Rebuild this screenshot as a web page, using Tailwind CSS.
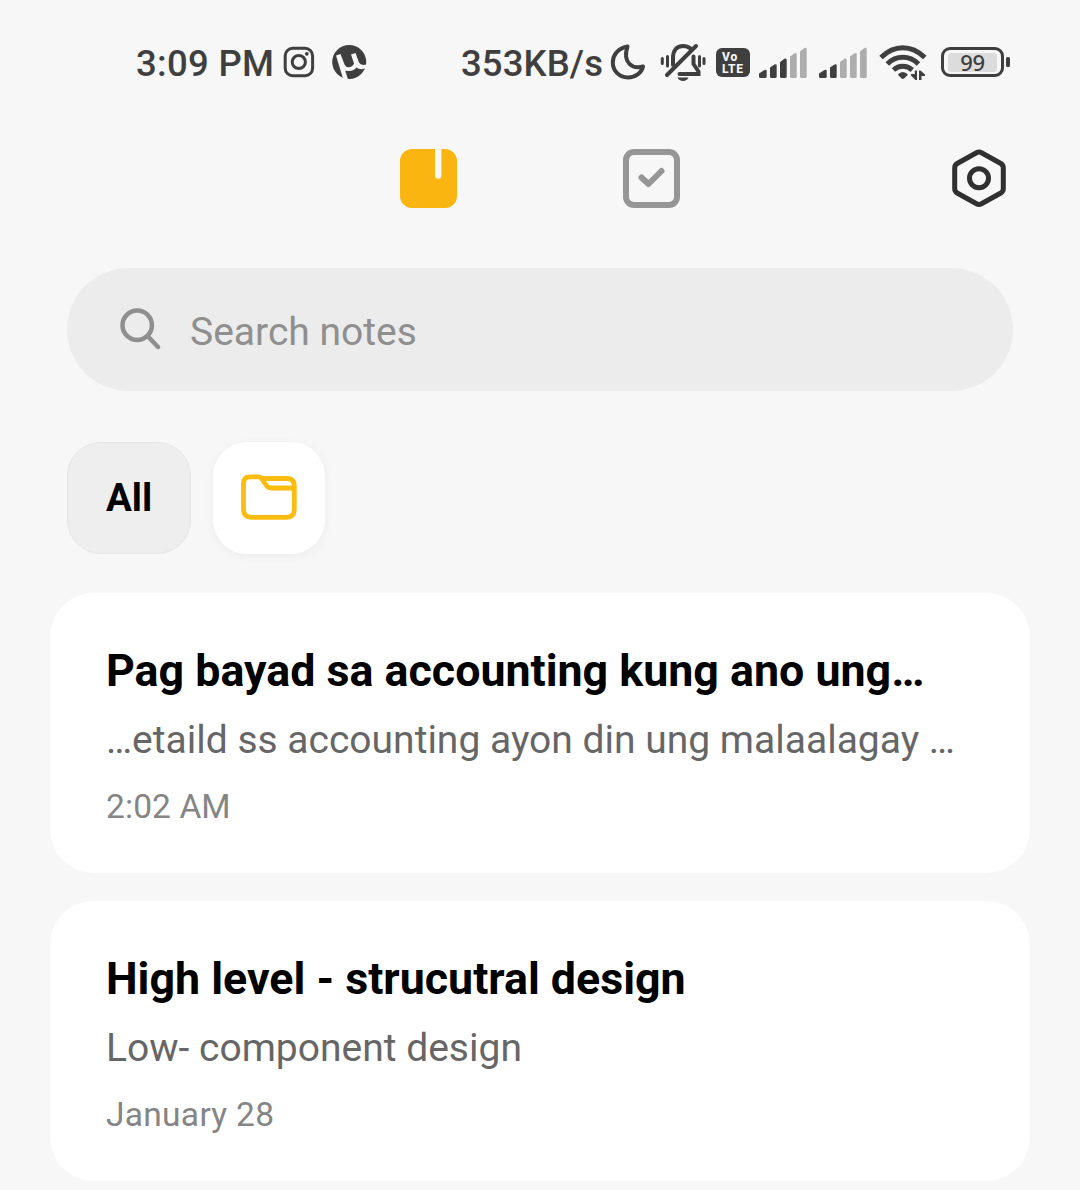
<!DOCTYPE html>
<html lang="en">
<head>
<meta charset="utf-8">
<meta name="viewport" content="width=device-width, initial-scale=1">
<title>Notes</title>
<script src="https://cdn.jsdelivr.net/npm/@tailwindcss/browser@4"></script>
</head>
<body class="bg-[#f7f7f7] font-[Roboto,sans-serif]">
<div class="flex h-[1190px] w-[1080px] flex-col overflow-hidden">

  <!-- Status bar -->
  <header class="mt-9 flex h-14 shrink-0 items-center pl-34 text-[36.500px] leading-none font-medium text-[#3f3f3f]">
    <span class="w-[147px] tracking-[0.3px] whitespace-nowrap">3:09 PM</span>
    <svg class="h-14 w-8" viewBox="283 36 32 56" fill="none" stroke="#3f3f3f" stroke-width="3">
      <rect x="285.2" y="48.3" width="27.4" height="27.4" rx="7.5"/>
      <circle cx="298.8" cy="62" r="6.6"/>
      <circle cx="306.8" cy="53.8" r="1.9" fill="#3f3f3f" stroke="none"/>
    </svg>
    <svg class="ml-4 h-14 w-9" viewBox="331 36 36 56" fill="none">
      <circle cx="349.2" cy="62" r="17" fill="#3f3f3f"/>
      <path d="M336 55.500L340.500 54L344.500 64.500Q346 67.500 349 67.200Q353 66.500 354 63.500L351 54.500L355.500 53L359 62.500Q360.500 66 367 64.500V68Q360 70.500 356.500 67.500Q354 70.800 348.800 71L345.300 70.800L348 79.500L343 78.500Z" fill="#f7f7f7"/>
    </svg>
    <span class="ml-[94px] w-[149px] tracking-[0.1px] whitespace-nowrap">353KB/s</span>
    <svg class="h-14 w-[38px]" viewBox="610 36 38 56" fill="none" stroke="#3f3f3f" stroke-width="4" stroke-linejoin="round">
      <path d="M627.500 46.500C617 48.500 612.800 56 612.800 62.500C612.800 71 619.500 77.500 628 77.500C635.500 77.500 641.500 73 643 66.500C633 69.500 622 63 627.500 46.500Z"/>
    </svg>
    <svg class="ml-3 h-14 w-[46px]" viewBox="660 36 46 56" fill="none" stroke="#3f3f3f" stroke-width="4" stroke-linecap="round">
      <path d="M673 65V58C673 50 677 46 683 46C686.500 46 688.500 46.800 690.500 48.500M693.500 56.500V64L698.500 71.500V74H679.500M696 46L667 75"/>
      <path d="M667.500 56.500V66M699.500 56.500V66M662.300 58.500V63.500M704 58.500V63.500" stroke-width="3"/>
      <path d="M677.500 77.500H688.500C687 82 679 82 677.500 77.500Z" fill="#3f3f3f" stroke="none"/>
    </svg>
    <div class="mb-[3px] ml-2.5 flex h-[29px] w-[34px] flex-col justify-center rounded-md bg-[#3f3f3f] pl-1.5 text-[12px] leading-[12px] font-extrabold text-[#f7f7f7]">
      <span class="h-3 tracking-[0.8px]">Vo</span><span class="h-3 tracking-[0.8px]">LTE</span>
    </div>
    <svg class="ml-2 h-14 w-[50px]" viewBox="758 36 50 56" fill="#adadad">
      <g fill="#3f3f3f">
        <path d="M759 73.500L764.500 70Q766.700 69 766.700 71V76.500Q766.700 78 765.200 78H760.500Q759 78 759 76.500Z"/>
        <path d="M770 67.500L774.500 64.500Q776.700 63.500 776.700 65.500V76.500Q776.700 78 775.200 78H771.500Q770 78 770 76.500Z"/>
        <path d="M780 62L784.500 58.800Q786.700 57.800 786.700 60V76.500Q786.700 78 785.200 78H781.500Q780 78 780 76.500Z"/>
      </g>
      <path d="M790 56.500L794.500 53.300Q796.700 52.300 796.700 54.300V76.500Q796.700 78 795.200 78H791.500Q790 78 790 76.500Z"/>
      <path d="M800 51.500L804.500 48Q806.700 47 806.700 49V76.500Q806.700 78 805.200 78H801.500Q800 78 800 76.500Z"/>
    </svg>
    <svg class="ml-2.5 h-14 w-[50px]" viewBox="758 36 50 56" fill="#adadad">
      <g fill="#3f3f3f">
        <path d="M759 73.500L764.500 70Q766.700 69 766.700 71V76.500Q766.700 78 765.200 78H760.500Q759 78 759 76.500Z"/>
        <path d="M770 67.500L774.500 64.500Q776.700 63.500 776.700 65.500V76.500Q776.700 78 775.200 78H771.500Q770 78 770 76.500Z"/>
      </g>
      <path d="M780 62L784.500 58.800Q786.700 57.800 786.700 60V76.500Q786.700 78 785.200 78H781.500Q780 78 780 76.500Z"/>
      <path d="M790 56.500L794.500 53.300Q796.700 52.300 796.700 54.300V76.500Q796.700 78 795.200 78H791.500Q790 78 790 76.500Z"/>
      <path d="M800 51.500L804.500 48Q806.700 47 806.700 49V76.500Q806.700 78 805.200 78H801.500Q800 78 800 76.500Z"/>
    </svg>
    <svg class="ml-2.5 h-14 w-[50px]" viewBox="878 36 50 56" fill="none" stroke="#3f3f3f" stroke-width="5">
      <path d="M881 57.500Q891 47.800 902.800 47.800T924.800 57.500"/>
      <path d="M887.300 64Q894 57.300 902.800 57.300T918.500 64"/>
      <path d="M893.500 70Q897.500 66.300 902.800 66.300T912.300 70"/>
      <path d="M898.500 75.500Q897.500 74.500 899 73.500Q902.800 70.500 906.800 73.500Q908.300 74.500 907.300 75.500L904.300 78.300Q902.800 79.500 901.400 78.300Z" fill="#3f3f3f" stroke="none"/>
      <path d="M914.800 70.500H917V80H915.500L911 75.500V74H914.800ZM919 80V70.500H920.500L925 74.500V76H921.500V80Z" fill="#3f3f3f" stroke="none"/>
    </svg>
    <div class="mb-1 ml-[13px] flex h-[30px] w-[63px] items-center rounded-[9px] border-3 border-[#3f3f3f] p-1">
      <span class="flex h-[19px] w-full items-center justify-center rounded-[3px] bg-[#dcdcdc] pb-px font-['Noto_Sans',sans-serif] text-[22px] leading-none tracking-[-0.3px] text-[#3f3f3f]">99</span>
    </div>
    <i class="mb-1 ml-0.5 h-2.5 w-1 rounded-[1.5px] bg-[#3f3f3f]"></i>
  </header>

  <!-- Notes / tasks tabs and settings -->
  <nav class="mt-[52px] flex h-[70px] shrink-0 items-center pl-[400px]">
    <svg class="h-[60px] w-[58px]" viewBox="400 149 58 60" fill="#fab511">
      <path d="M412 149H435V175.500A3.200 3.200 0 0 0 441.400 175.500V149H445A12 12 0 0 1 457 161V196A12 12 0 0 1 445 208H412A12 12 0 0 1 400 196V161A12 12 0 0 1 412 149Z"/>
    </svg>
    <svg class="ml-[165px] h-[60px] w-[58px]" viewBox="623 149 58 60" fill="none" stroke="#969696" stroke-width="6">
      <rect x="626" y="152" width="51" height="53" rx="8"/>
      <path d="M641.500 177.500L648.500 184L661.500 171" stroke-linecap="round" stroke-linejoin="round"/>
    </svg>
    <svg class="ml-[269px] h-[60px] w-[58px]" viewBox="950 149 58 60" fill="none" stroke="#303030" stroke-width="5">
      <path d="M976.500 152.700Q979 151.300 981.500 152.700L1000.800 163.500Q1003.300 165 1003.300 168V188.500Q1003.300 191.500 1000.800 193L981.500 203.800Q979 205.200 976.500 203.800L957.200 193Q954.700 191.500 954.700 188.500V168Q954.700 165 957.200 163.500Z"/>
      <circle cx="979" cy="178.200" r="9.500"/>
    </svg>
  </nav>

  <!-- Search -->
  <div class="mx-[67px] mt-[54px] flex h-[123px] shrink-0 items-center rounded-full bg-[#ececec] pl-[51px] text-[39px] text-[#8f8f8f]">
    <svg class="mb-0.5 h-[46px] w-11" viewBox="118 306 44 46" fill="none" stroke="#8f8f8f" stroke-width="4.500" stroke-linecap="round">
      <circle cx="137.200" cy="325.200" r="14.700"/>
      <path d="M148 336.500L158 347"/>
    </svg>
    <span class="ml-7 pt-1.5">Search notes</span>
  </div>

  <!-- Folder filters -->
  <div class="mt-[51px] ml-[67px] flex h-28 shrink-0 gap-[22px]">
    <button class="w-[124px] rounded-[34px] border border-[#e6e6e6] bg-[#eeeeee] text-[38.500px] font-bold text-black">All</button>
    <button class="flex w-28 items-center justify-center rounded-[34px] bg-white shadow-[0_2px_10px_rgba(0,0,0,0.05)]">
      <svg class="mb-0.5 h-[46px] w-14" viewBox="241 474 56 46" fill="none" stroke="#fbbc10" stroke-width="4.800" stroke-linejoin="round">
        <path d="M250 476.800H258C260 476.800 261 477.500 262 478.500H287Q294.300 478.500 294.300 486V509.500Q294.300 517.300 286.500 517.300H251.500Q243.500 517.300 243.500 509.500V483.500Q243.500 476.800 250 476.800Z"/>
        <path d="M261 477.500L266 485Q268 488 271 488H294"/>
      </svg>
    </button>
  </div>

  <!-- Notes list -->
  <main class="mx-[50px] mt-[39px] flex flex-col gap-7">
    <article class="h-[280px] shrink-0 rounded-[44px] bg-white px-14 pt-12 whitespace-nowrap">
      <h2 class="text-[44.750px] leading-[60px] font-bold text-black">Pag bayad sa accounting kung ano ung…</h2>
      <p class="mt-3 text-[39px] leading-[54px] text-[#666666]">…etaild ss accounting ayon din ung malaalagay …</p>
      <time class="mt-[17px] block text-[33.500px] leading-[46px] tracking-[0.1px] text-[#858585]">2:02 AM</time>
    </article>
    <article class="h-[280px] shrink-0 rounded-[44px] bg-white px-14 pt-12 whitespace-nowrap">
      <h2 class="text-[44.750px] leading-[60px] font-bold text-black">High level - strucutral design</h2>
      <p class="mt-3 text-[39px] leading-[54px] text-[#666666]">Low- component design</p>
      <time class="mt-[17px] block text-[33.500px] leading-[46px] tracking-[0.3px] text-[#858585]">January 28</time>
    </article>
  </main>
</div>
</body>
</html>
